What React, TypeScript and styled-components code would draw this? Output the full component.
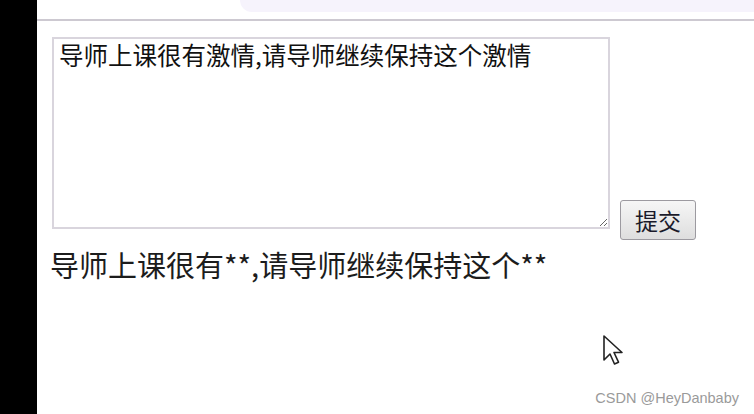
import * as React from 'react';
import styled, { createGlobalStyle } from 'styled-components';

const GlobalStyle = createGlobalStyle`
  html, body {
    margin: 0;
    padding: 0;
    background: #ffffff;
  }
  body {
    font-family: "Noto Sans CJK SC", "Liberation Sans", sans-serif;
  }
`;

const Page = styled.div`
  position: relative;
  display: flex;
  width: 754px;
  height: 414px;
  overflow: hidden;
  background: #ffffff;
`;

const SideStrip = styled.div`
  width: 37px;
  flex-shrink: 0;
  background: #000000;
`;

const Main = styled.div`
  flex: 1;
  display: flex;
  flex-direction: column;
`;

const TopBar = styled.div`
  height: 19px;
  display: flex;
  justify-content: flex-end;
  border-bottom: 2px solid #cdc9d1;
`;

const TabShape = styled.div`
  width: 514px;
  height: 12px;
  background: #f6f3fc;
  border-bottom-left-radius: 12px;
`;

const Content = styled.div`
  padding: 16px 0 0 15px;
`;

const FormRow = styled.div`
  display: flex;
  align-items: flex-end;
  gap: 10px;
`;

const TextBox = styled.textarea`
  box-sizing: border-box;
  width: 558px;
  height: 192px;
  margin: 0 0 11px 0;
  padding: 1px 5px;
  border: 2px solid #d9d5dd;
  font-family: "Noto Sans CJK SC", sans-serif;
  font-size: 24.5px;
  line-height: 1.2;
  color: #111111;
  resize: both;
  outline: none;
`;

const SubmitButton = styled.button`
  box-sizing: border-box;
  width: 76px;
  height: 40px;
  padding: 0;
  border: 1px solid #9c9aa0;
  border-radius: 3px;
  background: linear-gradient(#f6f6f6, #dedede);
  font-family: "Noto Sans CJK SC", sans-serif;
  font-size: 23px;
  color: #1a1a2a;
`;

const Result = styled.div`
  margin-top: 7px;
  margin-left: -2px;
  font-size: 29px;
  line-height: 1.2;
  color: #1c1c1c;
`;

const Pointer = styled.svg`
  position: absolute;
  left: 602px;
  top: 334px;
`;

const Watermark = styled.div`
  position: absolute;
  right: 15px;
  bottom: 8px;
  font-family: "Liberation Sans", sans-serif;
  font-size: 14.5px;
  color: #9a9a9a;
`;

export default function App() {
  const [text, setText] = React.useState('导师上课很有激情,请导师继续保持这个激情');
  return (
    <Page>
      <GlobalStyle />
      <SideStrip />
      <Main>
        <TopBar>
          <TabShape />
        </TopBar>
        <Content>
          <FormRow>
            <TextBox value={text} onChange={e => setText(e.target.value)} />
            <SubmitButton>提交</SubmitButton>
          </FormRow>
          <Result>导师上课很有**,请导师继续保持这个**</Result>
        </Content>
      </Main>
      <Pointer width="26" height="34" viewBox="0 0 26 34">
        <path
          d="M2 2 L2 26 L8 20 L12.5 30 L16.5 28.2 L12 18.5 L20 18.5 Z"
          fill="#ffffff"
          stroke="#222222"
          strokeWidth="1.6"
          strokeLinejoin="round"
        />
      </Pointer>
      <Watermark>CSDN @HeyDanbaby</Watermark>
    </Page>
  );
}
